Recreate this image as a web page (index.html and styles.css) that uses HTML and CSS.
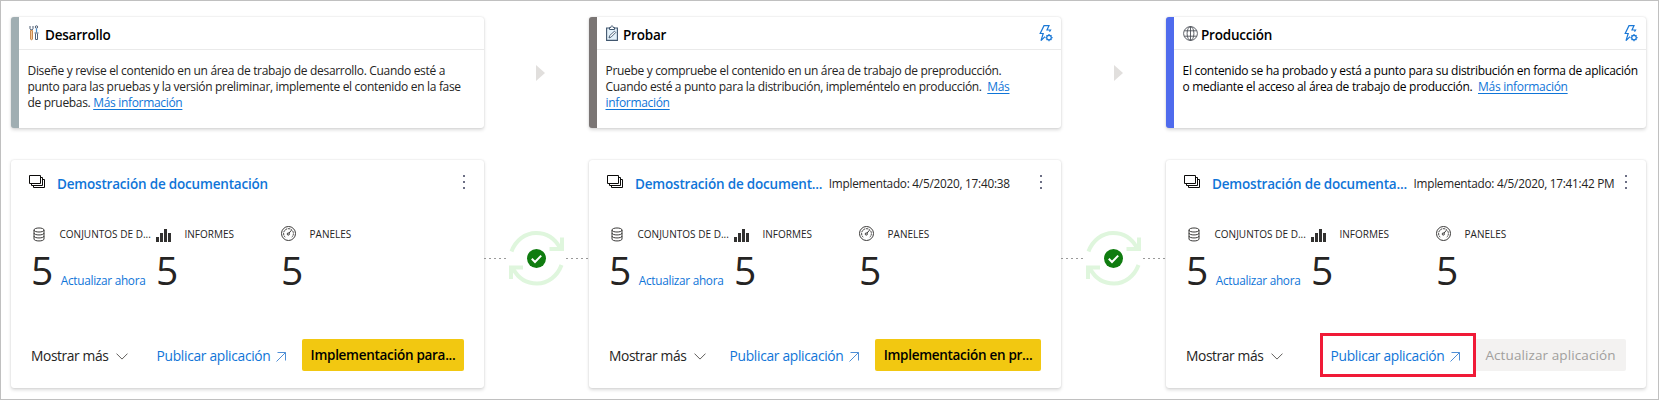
FILE: index.html
```html
<!DOCTYPE html>
<html lang="es">
<head>
<meta charset="utf-8">
<title>Canalización de implementación</title>
<link rel="stylesheet" href="styles.css">
</head>
<body>
<svg class="defs" aria-hidden="true">
  <symbol id="stack" viewBox="0 0 16 13">
    <path d="M.5.5h11v8H.5zM11.5 2.500h2v8h-11v-2M13.500 4.500h2v8h-11v-2" fill="none" stroke="#0b0a09"/>
  </symbol>
  <symbol id="database" viewBox="0 0 12 15">
    <path d="M1 3v9c0 2.600 10 2.600 10 0V3M1 3c0-2.700 10-2.700 10 0s-10 2.700-10 0M1 6c0 2.600 10 2.600 10 0M1 9c0 2.600 10 2.600 10 0" fill="none" stroke="#3b3a39"/>
  </symbol>
  <symbol id="chart" viewBox="0 0 16 13">
    <path d="M0 8h3v5H0zM4 4h3v9H4zM8 0h3v13H8zM12 4h3v9h-3z" fill="#323130"/>
  </symbol>
  <symbol id="gauge" viewBox="0 0 15 15">
    <g fill="none" stroke="#3b3a39">
      <circle cx="7.500" cy="7.500" r="7"/>
      <path d="M4.200 11.200a4.900 4.900 0 1 1 6.600 0" stroke-dasharray="2 .7"/>
      <circle cx="7.300" cy="8" r="1.100"/>
      <path d="M8 7.200l2.400-3"/>
    </g>
  </symbol>
  <symbol id="dots" viewBox="0 0 4 16">
    <path d="M1 1h2v2H1zM1 7h2v2H1zM1 13h2v2H1z" fill="#6c6f85"/>
  </symbol>
  <symbol id="chevron" viewBox="0 0 12 7">
    <path d="M.5.6L6 6.100 11.500.6" fill="none" stroke="#605e5c"/>
  </symbol>
  <symbol id="launch" viewBox="0 0 10 10">
    <path d="M.5 9.500l9-9M1.500.5h8v8" fill="none" stroke="#4f8fd6"/>
  </symbol>
  <symbol id="rules" viewBox="0 0 14 17">
    <g fill="none" stroke="#1a78d6" stroke-width="1.200">
      <path d="M10.500 6.600L11.500 5H8L10 .7H5L1.200 8.500h3L2 15.600l4-4"/>
      <circle cx="10" cy="12.600" r="2.300"/>
      <path d="M10 9v1.300M10 15v1.300M6.500 12.600h1.200M12.400 12.600h1.200M7.600 10.200l.8.800M11.600 14.200l.8.800M12.400 10.200l-.8.800M8.400 14.200l-.8.800"/>
    </g>
  </symbol>
  <symbol id="sync" viewBox="0 0 55 55">
    <g fill="none" stroke="#dff6dd" stroke-width="4">
      <path d="M2.500 20.500C6.500 9.500 16 2 27 2c10.500 0 19 5.500 24 15"/>
      <path d="M53 6.500V18H40.500"/>
      <path d="M52.500 34C48.500 45 39 52.500 28 52.500 17.500 52.500 9 47 4 37.500"/>
      <path d="M2 48V36.500h12"/>
    </g>
    <circle cx="27.500" cy="27.500" r="9.500" fill="#107c10"/>
    <path d="M22.800 27.800l3.200 3.200 6.200-6.400" fill="none" stroke="#fff" stroke-width="2"/>
  </symbol>
</svg>

<main class="pipeline">
  <section class="stage stage-dev">
    <header class="stage-head">
      <svg class="stage-icon" viewBox="0 0 10 16">
        <path d="M1 1v2.500L2 5h1l1-1.500V1" fill="none" stroke="#4a5a70"/>
        <path d="M1.500 5.500v8.500c0 1 2 1 2 0V5.500z" fill="#f3c9a0" stroke="#c98a50"/>
        <circle cx="7.500" cy="2" r="1.200" fill="#fff" stroke="#4a5a70"/>
        <path d="M7.500 3.500v4" stroke="#4a90d0" stroke-width="1.200"/>
        <path d="M5.500 8h4M6.500 8.500v6h2v-6" fill="none" stroke="#50627c"/>
      </svg>
      <h2>Desarrollo</h2>
    </header>
    <p>Diseñe y revise el contenido en un área de trabajo de desarrollo. Cuando esté a<br>punto para las pruebas y la versión preliminar, implemente el contenido en la fase<br>de pruebas. <a>Más información</a></p>
  </section>

  <div class="next"><svg viewBox="0 0 9 16"><path d="M0 0l9 8-9 8z" fill="#e1dfdd"/></svg></div>

  <section class="stage stage-test">
    <header class="stage-head">
      <svg class="stage-icon wide" viewBox="0 0 12 16">
        <path d="M.6 3h10.800v12.400H.6z" fill="#e4f1fa" stroke="#40566e" stroke-width="1.100"/>
        <path d="M3.500 4.500v-2h1.300c0-2.200 2.400-2.200 2.400 0h1.300v2z" fill="#fff" stroke="#40566e"/>
        <path d="M3 13l.7-2.500 4.800-4.300 1.200 1.300-4.500 4.500z" fill="#fff" stroke="#40566e" stroke-width=".9"/>
      </svg>
      <h2>Probar</h2>
      <svg class="rules"><use href="#rules"/></svg>
    </header>
    <p>Pruebe y compruebe el contenido en un área de trabajo de preproducción.<br>Cuando esté a punto para la distribución, impleméntelo en producción.&nbsp; <a>Más<br>información</a></p>
  </section>

  <div class="next"><svg viewBox="0 0 9 16"><path d="M0 0l9 8-9 8z" fill="#e1dfdd"/></svg></div>

  <section class="stage stage-prod">
    <header class="stage-head">
      <svg class="stage-icon globe" viewBox="0 0 15 15">
        <g fill="none" stroke="#4c5058" stroke-width=".9">
          <circle cx="7.500" cy="7.500" r="6.900"/>
          <ellipse cx="7.500" cy="7.500" rx="3.400" ry="6.900"/>
          <path d="M7.500.6v13.800M1.300 4.800h12.400M1.300 10.200h12.400"/>
        </g>
      </svg>
      <h2>Producción</h2>
      <svg class="rules"><use href="#rules"/></svg>
    </header>
    <p>El contenido se ha probado y está a punto para su distribución en forma de aplicación<br>o mediante el acceso al área de trabajo de producción.&nbsp; <a>Más información</a></p>
  </section>

  <article class="card">
    <header class="card-head">
      <svg class="stack"><use href="#stack"/></svg>
      <h3>Demostración de documentación</h3>
      <svg class="dots"><use href="#dots"/></svg>
    </header>
    <div class="stats">
      <div class="stat">
        <div class="label"><span class="ico"><svg class="database"><use href="#database"/></svg></span>CONJUNTOS DE D...</div>
        <div class="value">5<a>Actualizar ahora</a></div>
      </div>
      <div class="stat">
        <div class="label"><span class="ico"><svg class="chart"><use href="#chart"/></svg></span>INFORMES</div>
        <div class="value">5</div>
      </div>
      <div class="stat">
        <div class="label"><span class="ico"><svg class="gauge"><use href="#gauge"/></svg></span>PANELES</div>
        <div class="value">5</div>
      </div>
    </div>
    <footer class="actions">
      <span class="more">Mostrar más<svg class="chevron"><use href="#chevron"/></svg></span>
      <a class="publish">Publicar aplicación<svg class="launch"><use href="#launch"/></svg></a>
      <button class="deploy to-test">Implementación para...</button>
    </footer>
  </article>

  <div class="link"><i></i><svg><use href="#sync"/></svg><i></i></div>

  <article class="card">
    <header class="card-head">
      <svg class="stack"><use href="#stack"/></svg>
      <h3>Demostración de document...</h3>
      <time>Implementado: 4/5/2020, 17:40:38</time>
      <svg class="dots"><use href="#dots"/></svg>
    </header>
    <div class="stats">
      <div class="stat">
        <div class="label"><span class="ico"><svg class="database"><use href="#database"/></svg></span>CONJUNTOS DE D...</div>
        <div class="value">5<a>Actualizar ahora</a></div>
      </div>
      <div class="stat">
        <div class="label"><span class="ico"><svg class="chart"><use href="#chart"/></svg></span>INFORMES</div>
        <div class="value">5</div>
      </div>
      <div class="stat">
        <div class="label"><span class="ico"><svg class="gauge"><use href="#gauge"/></svg></span>PANELES</div>
        <div class="value">5</div>
      </div>
    </div>
    <footer class="actions">
      <span class="more">Mostrar más<svg class="chevron"><use href="#chevron"/></svg></span>
      <a class="publish">Publicar aplicación<svg class="launch"><use href="#launch"/></svg></a>
      <button class="deploy to-prod">Implementación en pr...</button>
    </footer>
  </article>

  <div class="link"><i></i><svg><use href="#sync"/></svg><i></i></div>

  <article class="card">
    <header class="card-head">
      <svg class="stack"><use href="#stack"/></svg>
      <h3>Demostración de documenta...</h3>
      <time>Implementado: 4/5/2020, 17:41:42 PM</time>
      <svg class="dots"><use href="#dots"/></svg>
    </header>
    <div class="stats">
      <div class="stat">
        <div class="label"><span class="ico"><svg class="database"><use href="#database"/></svg></span>CONJUNTOS DE D...</div>
        <div class="value">5<a>Actualizar ahora</a></div>
      </div>
      <div class="stat">
        <div class="label"><span class="ico"><svg class="chart"><use href="#chart"/></svg></span>INFORMES</div>
        <div class="value">5</div>
      </div>
      <div class="stat">
        <div class="label"><span class="ico"><svg class="gauge"><use href="#gauge"/></svg></span>PANELES</div>
        <div class="value">5</div>
      </div>
    </div>
    <footer class="actions">
      <span class="more">Mostrar más<svg class="chevron"><use href="#chevron"/></svg></span>
      <a class="publish marked">Publicar aplicación<svg class="launch"><use href="#launch"/></svg></a>
      <button class="deploy update" disabled>Actualizar aplicación</button>
    </footer>
  </article>
</main>
</body>
</html>
```
FILE: styles.css
```css
* { box-sizing: border-box; }

body {
  margin: 0;
  height: 400px;
  border: 1px solid #c0c0c0;
  background: #fff;
  color: #252423;
  font-family: "Open Sans", "Noto Sans", sans-serif;
  white-space: nowrap;
  overflow: hidden;
}

h2, h3, p { margin: 0; font-size: inherit; }
svg { flex: none; display: block; }
a { color: #0f75d8; }
.defs { position: absolute; width: 0; height: 0; }

.pipeline {
  display: grid;
  grid-template-columns: 473px 105px 472px 105px 480px;
  grid-template-rows: 111px 228px;
  row-gap: 32px;
  padding: 16px 0 0 10px;
}

.stage, .card {
  border-radius: 3px;
  background: #fff;
  box-shadow: 0 1.600px 3.600px rgba(0, 0, 0, .15), 0 0 1.500px rgba(0, 0, 0, .13);
}

/* Stage description */
.stage { border-left: 8px solid; }
.stage-dev { border-color: #a0aeb2; }
.stage-test { border-color: #7a7574; }
.stage-prod { border-color: #4f6bed; }

.stage-head {
  display: flex;
  align-items: center;
  height: 33px;
  padding: 3px 8px 0 10px;
  border-bottom: 1px solid #eaeaea;
}
.stage-icon { width: 10px; height: 16px; margin: -3px 6px 0 0; }
.stage-icon.wide { width: 12px; margin: -3px 5px 0 -1px; }
.stage-icon.globe { width: 15px; height: 15px; margin: -2px 3.500px 0 -1.500px; }
.stage-head h2 { color: #000; padding-top: 2px; font-size: 13.500px; font-weight: 560; line-height: 27px; letter-spacing: -.220px; }
.rules { width: 14px; height: 17px; margin: -2px 0 0 auto; }

.stage p { padding: 13px 0 0 8.500px; font-size: 12px; line-height: 16px; letter-spacing: -.320px; }
.stage-prod p { color: #000; letter-spacing: -.290px; }
.stage p a {
  text-decoration: underline 1px;
  text-underline-offset: 2px;
  text-decoration-skip-ink: none;
}

.next { display: grid; place-items: center; padding-left: 8px; }
.next svg { width: 9px; height: 16px; margin-top: 1px; }
.stage-test + .next { padding-left: 9px; }

/* Workspace card */
.card { padding: 13px 20px 17px 18px; display: flex; flex-direction: column; }
.card-head { display: flex; align-items: center; height: 20px; }
.stack { width: 16px; height: 13px; margin-top: -3px; }
.card-head h3 { margin-left: 12px; padding-top: 1px; color: #0f75d8; font-size: 13.500px; font-weight: 550; line-height: 20px; letter-spacing: -.190px; }
.card-head time { margin-left: 6.500px; font-size: 11.800px; line-height: 20px; letter-spacing: -.250px; }
.dots { width: 4px; height: 16px; margin: -2px -2px 0 auto; }

.stats { display: grid; grid-template-columns: repeat(3, 125px); margin: 31px 0 0 2px; }
.label { display: flex; align-items: center; height: 20px; font-size: 10px; letter-spacing: .020px; }
.ico { width: 28.500px; }
.database { width: 12px; height: 15px; margin: 1px 0 0 2px; }
.chart { width: 16px; height: 13px; margin: 3px 0 0 0; }
.gauge { width: 15px; height: 15px; margin-bottom: 1px; }
.value { margin-top: 6px; font-size: 39px; font-weight: 400; line-height: 40px; height: 40px; }
.value a { margin-left: 7.500px; font-size: 11.800px; font-weight: 400; letter-spacing: -.290px; }

.actions { display: flex; align-items: center; height: 32px; margin-top: auto; font-size: 13.800px; }
.more { display: flex; align-items: center; margin-left: 2px; padding-top: 1px; letter-spacing: -.400px; }
.chevron { width: 12px; height: 7px; margin: 2px 0 0 8px; }
.publish { display: flex; align-items: center; margin: 0 16px 0 auto; letter-spacing: -.310px; }
.launch { width: 10px; height: 10px; margin: 3px 0 0 5.500px; }
.publish.marked {
  height: 44px;
  margin-right: -1px;
  padding: 0 13px 0 7.500px;
  border: 3px solid #f01a37;
  z-index: 1;
}
.deploy {
  height: 32px;
  padding: 0;
  border: 0;
  border-radius: 2px;
  background: #f2c811;
  color: #000;
  font: 560 13.500px/32px "Open Sans", "Noto Sans", sans-serif;
  letter-spacing: -.290px;
}
.to-test { width: 162px; }
.to-prod { width: 166px; }
.update { width: 151px; background: #f3f2f1; color: #a19f9d; font-weight: 480; letter-spacing: .100px; }

/* Sync status between cards */
.link { display: flex; align-items: center; justify-content: space-between; height: 55px; margin-top: 71px; }
.link svg { width: 55px; height: 55px; }
.link i {
  width: 23px;
  height: 1px;
  background: repeating-linear-gradient(90deg, #999 0 2px, transparent 2px 5px);
}
```
